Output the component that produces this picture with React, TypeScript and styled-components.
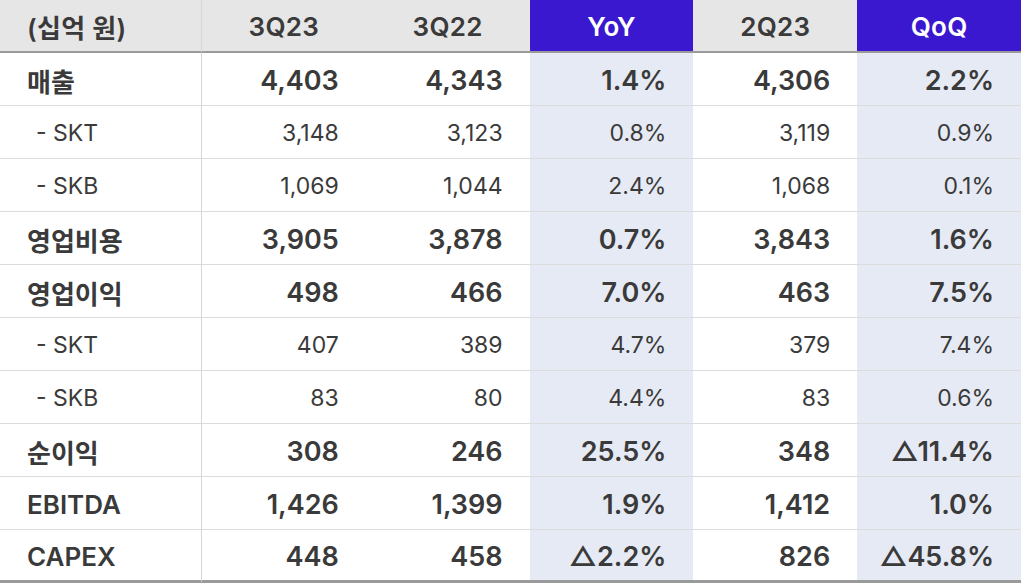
import React from 'react';
import styled, { createGlobalStyle, css } from 'styled-components';

type Row = {
  label: string;
  sub?: boolean;
  values: string[];
};

const columns = [
  { title: '3Q23' },
  { title: '3Q22' },
  { title: 'YoY', accent: true },
  { title: '2Q23' },
  { title: 'QoQ', accent: true },
];

const rows: Row[] = [
  { label: '매출', values: ['4,403', '4,343', '1.4%', '4,306', '2.2%'] },
  { label: '- SKT', sub: true, values: ['3,148', '3,123', '0.8%', '3,119', '0.9%'] },
  { label: '- SKB', sub: true, values: ['1,069', '1,044', '2.4%', '1,068', '0.1%'] },
  { label: '영업비용', values: ['3,905', '3,878', '0.7%', '3,843', '1.6%'] },
  { label: '영업이익', values: ['498', '466', '7.0%', '463', '7.5%'] },
  { label: '- SKT', sub: true, values: ['407', '389', '4.7%', '379', '7.4%'] },
  { label: '- SKB', sub: true, values: ['83', '80', '4.4%', '83', '0.6%'] },
  { label: '순이익', values: ['308', '246', '25.5%', '348', '△11.4%'] },
  { label: 'EBITDA', values: ['1,426', '1,399', '1.9%', '1,412', '1.0%'] },
  { label: 'CAPEX', values: ['448', '458', '△2.2%', '826', '△45.8%'] },
];

const GlobalStyle = createGlobalStyle`
  html, body {
    margin: 0;
    padding: 0;
    background: #ffffff;
  }
  body {
    font-family: Inter, "Noto Sans CJK KR", "Noto Sans", sans-serif;
    color: #3a3a3a;
  }
`;

const App = () => {
  return (
    <>
      <GlobalStyle />
      <Table>
        <HeadLabel>(십억 원)</HeadLabel>
        {columns.map((c) => (
          <HeadCell key={c.title} $accent={c.accent}>
            {c.title}
          </HeadCell>
        ))}
        {rows.map((r, i) => {
          const last = i === rows.length - 1;
          return (
            <React.Fragment key={i}>
              <LabelCell $sub={r.sub} $last={last}>
                {r.label}
              </LabelCell>
              {r.values.map((v, j) => (
                <ValueCell key={j} $sub={r.sub} $last={last} $accent={columns[j].accent}>
                  {v}
                </ValueCell>
              ))}
            </React.Fragment>
          );
        })}
      </Table>
    </>
  );
};

const Table = styled.div`
  display: grid;
  grid-template-columns: 202px repeat(5, 1fr);
  grid-template-rows: 53px repeat(9, 53px) 53px;
  width: 1021px;
  height: 583px;
`;

const HeadBase = css`
  display: flex;
  align-items: center;
  font-size: 26px;
  font-weight: 600;
  letter-spacing: 0.3px;
  border-bottom: 2px solid #9a9a9a;
  box-sizing: border-box;
  padding-top: 1px;
`;

const HeadLabel = styled.div`
  ${HeadBase}
  padding-left: 27px;
  background: #e6e6e6;
  border-right: 1px solid #d6d6d6;
  color: #3a3a3a;
`;

const HeadCell = styled.div<{ $accent?: boolean }>`
  ${HeadBase}
  justify-content: center;
  background: ${({ $accent }) => ($accent ? '#3a18cf' : '#e6e6e6')};
  color: ${({ $accent }) => ($accent ? '#ffffff' : '#3a3a3a')};
`;

const BodyBase = css<{ $sub?: boolean; $last?: boolean }>`
  display: flex;
  align-items: center;
  box-sizing: border-box;
  padding-top: 2px;
  border-bottom: ${({ $last }) => ($last ? '3px solid #9a9a9a' : '1px solid #dcdcdc')};
  font-size: ${({ $sub }) => ($sub ? '23px' : '27px')};
  font-weight: ${({ $sub }) => ($sub ? 400 : 600)};
`;

const LabelCell = styled.div<{ $sub?: boolean; $last?: boolean }>`
  ${BodyBase}
  padding-left: ${({ $sub }) => ($sub ? '36px' : '27px')};
  border-right: 1px solid #d6d6d6;
  font-size: ${({ $sub }) => ($sub ? '23px' : '26px')};
`;

const ValueCell = styled.div<{ $sub?: boolean; $last?: boolean; $accent?: boolean }>`
  ${BodyBase}
  justify-content: flex-end;
  padding-right: 27px;
  background: ${({ $accent }) => ($accent ? '#e6eaf5' : '#ffffff')};
`;

export default App;
